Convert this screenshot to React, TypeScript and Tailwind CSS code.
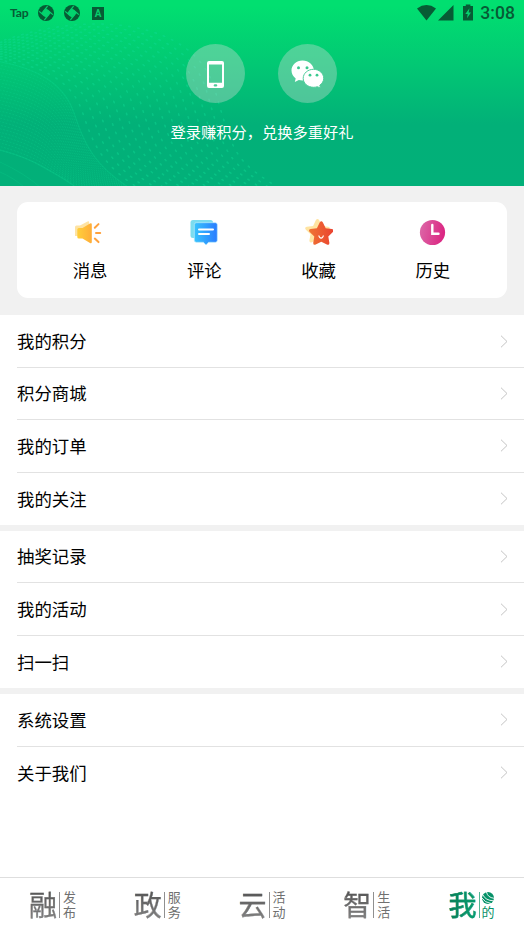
import type { ReactNode } from "react";

const GROUPS = [
  ["我的积分", "积分商城", "我的订单", "我的关注"],
  ["抽奖记录", "我的活动", "扫一扫"],
  ["系统设置", "关于我们"],
];

const TABS = [
  { main: "融", sub: "发布" },
  { main: "政", sub: "服务" },
  { main: "云", sub: "活动" },
  { main: "智", sub: "生活" },
];

// control points: start, c1, c2, mid, c3, end
const OUTER = [-4, 43, 90, 8, 195, 20, 215, 90, 235, 160, 285, 192];
const INNER = [-4, 61, 38, 68, 64, 84, 74, 113, 92, 166, 136, 192];
const LOWER = [-4, 149, 20, 155, 35, 162, 45, 168, 65, 178, 82, 192];

function blend(a: number[], b: number[], t: number) {
  const p = a.map((v, i) => (v + (b[i] - v) * t).toFixed(1));
  return `M${p[0]} ${p[1]}C${p[2]} ${p[3]} ${p[4]} ${p[5]} ${p[6]} ${p[7]}S${p[8]} ${p[9]} ${p[10]} ${p[11]}`;
}

function Waves() {
  return (
    <svg className="absolute inset-0 h-full w-full" fill="none" stroke="#10dc96" strokeLinecap="round">
      {Array.from({ length: 17 }, (_, i) => (
        <path
          key={i}
          d={blend(OUTER, INNER, i / 17)}
          strokeWidth="1.6"
          strokeDasharray="1.5 7.5"
          strokeDashoffset={(i % 2) * 4.5}
          opacity=".42"
        />
      ))}
      {Array.from({ length: 26 }, (_, i) => (
        <path
          key={i}
          d={blend(INNER, LOWER, i / 25)}
          strokeWidth=".9"
          strokeDasharray="1 2.4"
          strokeDashoffset={i * 1.2}
          opacity=".27"
        />
      ))}
      <path d={blend(INNER, INNER, 0)} strokeWidth="1.5" opacity=".18" />
      <path d={blend(LOWER, LOWER, 0)} strokeWidth="1.5" opacity=".22" />
      <path d="M0 162Q24 173 40 187M0 172Q14 178 24 187" opacity=".18" />
    </svg>
  );
}

function Aperture() {
  return (
    <svg className="h-4 w-4" viewBox="0 0 16 16">
      <circle cx="8" cy="8" r="8" fill="#075b35" />
      <path d="M8 3.2 12.8 8 8 12.8 3.2 8Z" fill="#03d36e" />
      <path
        d="M4.8 6.8 9.6 1.2M9.2 4.8l5.600 4.8M11.2 9.2 6.4 14.8M6.8 11.2 1.2 6.4"
        stroke="#03d36e"
        strokeWidth="1.2"
      />
    </svg>
  );
}

function StatusBar() {
  return (
    <div className="relative flex h-[26px] items-center pr-[9px] pl-[10px] text-[#075b35]">
      <span className="w-[20px] font-['Lato'] text-[12.2px] leading-none font-bold tracking-[-0.2px]">Tap</span>
      <div className="ml-[8px] flex gap-[10px]">
        <Aperture />
        <Aperture />
      </div>
      <div className="mt-px ml-[12px] flex h-[13px] w-3 items-center justify-center bg-[#075b35] font-['Roboto'] text-[10px] font-bold text-[#05cf6d]">
        A
      </div>
      <svg className="ml-auto h-[18px] w-[58px]" viewBox="0 0 58 18" fill="currentColor">
        <path d="M0 4.4Q9.5-2.3 19 4.4L9.5 16.5ZM36.5 1v15.5H21ZM46 2h2.8V.4h4.6V2H56v14.5H46Z" />
        <path d="M52.5 4.2 48.3 10h2.4l-.7 4.2 4-5.8h-2.4Z" fill="#04d56f" />
      </svg>
      <span className="mt-px ml-[5.5px] font-['Roboto'] text-[17.6px] leading-none font-medium">3:08</span>
    </div>
  );
}

function Header() {
  return (
    <header className="relative h-[185.5px] bg-[linear-gradient(180deg,#01df70_3%,#02c874_35%,#02b078_67%,#02b079_100%)]">
      <Waves />
      <StatusBar />
      <div className="relative mt-[18px] mr-px flex justify-center gap-[33px] pr-px">
        <div className="flex h-[59px] w-[59px] items-center justify-center rounded-full bg-[#dcdcdc]/35">
          <svg className="mt-px h-[27px] w-[17px]" viewBox="0 0 17 27">
            <path
              fill="#fff"
              fillRule="evenodd"
              d="M2 0h13q2 0 2 2v23q0 2-2 2H2q-2 0-2-2V2Q0 0 2 0ZM2 3.5v18.3h13V3.5ZM8.5 23.2c-2.4 0-2.4 2.4 0 2.4s2.4-2.4 0-2.4Z"
            />
          </svg>
        </div>
        <div className="flex h-[59px] w-[59px] items-center justify-center rounded-full bg-[#dcdcdc]/35">
          <svg className="h-[28px] w-[33px]" viewBox="0 0 33 28">
            <path fill="#fff" d="M11.5.5C5.2.5.5 5 .5 10.6c0 3.2 1.6 6 4.2 7.8L3.8 22l4-2.1c1.2.3 2.4.5 3.7.5 6.3 0 11.4-4.3 11.4-9.8S17.8.5 11.5.5Z" />
            <path
              fill="#fff"
              stroke="#51cd9c"
              strokeWidth="1"
              d="M22.6 9.3c-5.8 0-10.4 4-10.4 9s4.6 9 10.4 9c1.3 0 2.6-.2 3.7-.6l3.2 1.3-.7-2.8c2.4-1.7 3.9-4.1 3.9-6.9 0-5-4.5-9-10.1-9Z"
            />
            <g fill="#3bc98f">
              <circle cx="7.5" cy="7.8" r="1.5" />
              <circle cx="16" cy="7.8" r="1.5" />
              <circle cx="19" cy="15.2" r="1.4" />
              <circle cx="26" cy="15.2" r="1.4" />
            </g>
          </svg>
        </div>
      </div>
      <p className="relative mt-[16.5px] text-center text-[15.25px] leading-[22px] text-white">登录赚积分，兑换多重好礼</p>
    </header>
  );
}

const STAR =
  "M12.4 1.4q1.6-2.2 3.2 0l2.8 5.8 6.3.9q2.7.8.9 2.9L21 15.6l1.1 6.3q-.1 2.7-2.5 1.7L14 20.7l-5.6 2.9q-2.4 1-2.5-1.7L7 15.6 2.4 11Q.6 8.9 3.3 8.1l6.3-.9Z";

const SHORTCUTS: { label: string; icon: ReactNode }[] = [
  {
    label: "消息",
    icon: (
      <svg className="mr-1 h-7 w-7" viewBox="0 0 28 28">
        <linearGradient id="horn">
          <stop stopColor="#ffcf3b" />
          <stop offset="1" stopColor="#ffad38" />
        </linearGradient>
        <path d="M1 8q0-1.500 1.500-1.500H6L13.500 2.500q1.700-.8 1.700 1V17H1Z" fill="#fee3a3" />
        <path d="M3.3 10.500q0-1.500 1.500-1.500h3.700L16 4.500q1.800-.7 1.800 1v17.500q0 1.700-1.800 1L8.500 19.500H4.800q-1.500 0-1.500-1.500Z" fill="url(#horn)" />
        <path d="m20.8 8.8 3.7-3.7M22 14h4.200m-5.400 5.600 3.700 3.500" stroke="#ffa23d" strokeWidth="2" strokeLinecap="round" />
      </svg>
    ),
  },
  {
    label: "评论",
    icon: (
      <svg className="h-7 w-7" viewBox="0 0 28 28">
        <linearGradient id="chat">
          <stop stopColor="#38c3fd" />
          <stop offset="1" stopColor="#297cff" />
        </linearGradient>
        <rect x=".5" y="1" width="22.500" height="18" rx="2.500" fill="#7bdcef" />
        <path
          d="M6.300 3.700h19q2 0 2 2v15.600q0 2-2 2h-6.800l-2.500 2.600-2.600-2.600H6.300q-2 0-2-2V5.700q0-2 2-2Z"
          fill="url(#chat)"
          stroke="#b7ebfb"
          strokeWidth=".7"
        />
        <path d="M9 10.600h14M9 15h10" stroke="#fff" strokeWidth="2" strokeLinecap="round" />
      </svg>
    ),
  },
  {
    label: "收藏",
    icon: (
      <svg className="h-7 w-7" viewBox="0 0 28 28">
        <linearGradient id="star">
          <stop stopColor="#ef7432" />
          <stop offset="1" stopColor="#ea4231" />
        </linearGradient>
        <path d={STAR} fill="#ffe4a2" transform="translate(-1.500 -.3)" />
        <path d={STAR} fill="url(#star)" transform="translate(2.300 2)" />
        <path d="M13.800 16.500q.5 2.600 2.300 2.600t2.300-2.600" stroke="#fff" strokeWidth="1.200" fill="none" />
      </svg>
    ),
  },
  {
    label: "历史",
    icon: (
      <svg className="h-7 w-7" viewBox="0 0 28 28">
        <linearGradient id="clock" y2=".2">
          <stop stopColor="#dc6ba9" />
          <stop offset="1" stopColor="#db2783" />
        </linearGradient>
        <circle cx="13.500" cy="13.500" r="12.600" fill="url(#clock)" />
        <path d="M13.300 6v8.800h6.200" stroke="#fff" strokeWidth="2.400" fill="none" strokeLinecap="round" />
      </svg>
    ),
  },
];

function Row({ label, last }: { label: string; last: boolean }) {
  return (
    <div className={`ml-[17px] flex h-[52.4px] items-center justify-between pr-[16px] ${last ? "" : "border-b border-[#e2e2e2]"}`}>
      <span className="pb-[0.4px] text-[17.4px] leading-6">{label}</span>
      <svg className="h-[13px] w-2" viewBox="0 0 8 13" fill="none" stroke="#c4c4c4">
        <path d="m1 .7 6 5.800-6 5.800" />
      </svg>
    </div>
  );
}

function TabBar() {
  return (
    <nav className="mt-auto grid h-[55px] grid-cols-5 border-t border-[#dedede]">
      {TABS.map((tab) => (
        <div key={tab.main} className="flex justify-center pt-[11px] text-[#707070]">
          <span className="bg-linear-to-b from-[#505050] to-[#999] bg-clip-text text-[28px] leading-[30px] text-transparent [-webkit-text-stroke:0.3px_#77777766]">
            {tab.main}
          </span>
          <span className="mt-[3px] ml-[2px] h-[26px] w-px bg-[#909090]" />
          <span className="mt-[2px] ml-[2px] text-[13px] leading-[14px] tracking-[1.5px] [writing-mode:vertical-rl]">{tab.sub}</span>
        </div>
      ))}
      <div className="flex justify-center pt-[11px] text-[#079168]">
        <span className="bg-linear-to-r from-[#087b55] to-[#04a374] bg-clip-text text-[28px] leading-[30px] text-transparent [-webkit-text-stroke:0.4px_#078c62]">
          我
        </span>
        <span className="mt-[3px] ml-[2px] h-[26px] w-px bg-[#52b696]" />
        <span className="ml-[2px] flex flex-col items-center text-[13px] leading-[15px]">
          <svg className="mt-[3px] h-3 w-3 shrink-0" viewBox="0 0 12 12">
            <circle cx="6" cy="6" r="6" fill="#079168" />
            <path d="M4.500 0Q5.500 5.500 12 6.300M1 3Q3.500 8.500 11.500 8.800M0 6Q2.500 10.500 9 11.500" stroke="#fff" strokeWidth=".9" fill="none" />
          </svg>
          <span>的</span>
        </span>
      </div>
    </nav>
  );
}

export default function App() {
  return (
    <div className="flex h-[932px] w-[524px] flex-col overflow-hidden bg-white font-['Noto_Sans_CJK_SC',sans-serif] text-black">
      <Header />
      <section className="h-[129.9px] bg-[#f1f1f1] px-[17px] pt-[16.8px]">
        <div className="grid h-[96px] grid-cols-4 rounded-[11px] bg-white pt-[16.8px] pr-[17px] pl-[16px]">
          {SHORTCUTS.map((item) => (
            <div key={item.label} className="flex flex-col items-center">
              {item.icon}
              <span className="mt-[11px] text-[17.4px] leading-6">{item.label}</span>
            </div>
          ))}
        </div>
      </section>
      {GROUPS.map((rows, i) => (
        <section key={rows[0]} className={i > 0 ? "border-t-[6px] border-[#f1f1f1]" : ""}>
          {rows.map((label, j) => (
            <Row key={label} label={label} last={j === rows.length - 1} />
          ))}
        </section>
      ))}
      <TabBar />
    </div>
  );
}
